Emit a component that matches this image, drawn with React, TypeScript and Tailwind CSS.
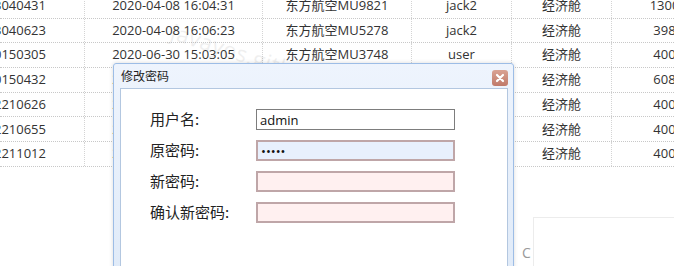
import React from 'react';

const rows = [
  ['20202003040431', '2020-04-08 16:04:31', '东方航空MU9821', 'jack2', '经济舱', '1300'],
  ['20202003040623', '2020-04-08 16:06:23', '东方航空MU5278', 'jack2', '经济舱', '398'],
  ['20202020150305', '2020-06-30 15:03:05', '东方航空MU3748', 'user', '经济舱', '400'],
  ['20202020150432', '2020-06-30 15:04:32', '东方航空MU3748', 'user', '经济舱', '608'],
  ['20202022210626', '2020-07-02 21:06:26', '东方航空MU5278', 'admin', '经济舱', '400'],
  ['20202022210655', '2020-07-02 21:06:55', '东方航空MU5278', 'admin', '经济舱', '400'],
  ['20202022211012', '2020-07-02 21:10:12', '东方航空MU5278', 'admin', '经济舱', '400'],
];

const widths = ['w-[85px]', 'w-[178px]', 'w-[149px]', 'w-[100px]', 'w-[100px]', 'w-[106px]'];

const font = { fontFamily: '"Open Sans", "Noto Sans CJK SC", sans-serif' };

function Field({ label, value, type, tone }: { label: string; value?: string; type?: string; tone: 'plain' | 'fill' | 'empty' }) {
  const cls =
    tone === 'plain'
      ? 'border border-[#7d7d7d] bg-white'
      : tone === 'fill'
        ? 'border-2 border-[#bfa6a8] bg-[#e8f0fd]'
        : 'border-2 border-[#bfa6a8] bg-[#fff0f0]';
  return (
    <div className="flex items-center h-[21px]">
      <div className="w-[106px] text-[15px] text-[#222]">{label}</div>
      <input
        readOnly
        type={type || 'text'}
        value={value || ''}
        className={`w-[199px] h-[21px] px-[3px] text-[13px] text-[#111] outline-none ${cls}`}
        style={font}
      />
    </div>
  );
}

export default function App() {
  return (
    <div className="relative w-[674px] h-[266px] overflow-hidden bg-white text-[13px] text-[#333]" style={font}>
      {/* grid */}
      <div className="-mt-[6px]">
        {rows.map((r, i) => (
          <div key={i} className="flex h-[24.7px] border-b border-dotted border-[#c8c8c8] whitespace-nowrap">
            {r.map((c, j) => (
              <div
                key={j}
                className={`${widths[j]} shrink-0 flex items-center overflow-hidden border-r border-dotted border-[#d4d4d4] ${
                  j === 0 ? 'justify-end pr-[38px]' : 'justify-center'
                }`}
              >
                {c}
              </div>
            ))}
          </div>
        ))}
      </div>

      {/* bottom pager area */}
      <div className="flex mt-[50px]">
        <div className="w-[533px] shrink-0 pl-[522px] pt-[25px] text-[14px] text-[#999]">C</div>
        <div className="flex-1 h-[50px] border-t border-l border-[#ececec]" />
      </div>

      {/* watermark */}
      <div className="absolute left-[172px] top-[14px] rotate-[18deg] origin-left text-[22px] text-[#000] opacity-[0.06] tracking-wide pointer-events-none">
        javayos.github.io
      </div>

      {/* dialog */}
      <div className="absolute left-[113px] top-[63px] w-[401px] h-[230px] flex flex-col border border-[#9dbde6] rounded-t-[3px] bg-gradient-to-b from-[#eef4fd] to-[#dfeaf8] shadow-[0_0_4px_rgba(0,0,0,0.15)]">
        <div className="h-[24px] flex items-center justify-between pl-[7px] pr-[5px]">
          <span className="text-[12px] text-[#1e1e1e]" style={{ fontFamily: '"Noto Sans CJK SC", sans-serif' }}>修改密码</span>
          <div className="w-[16px] h-[16px] mt-[3px] rounded-[3px] bg-gradient-to-b from-[#d9a394] to-[#c07a6a] flex items-center justify-center">
            <svg width="10" height="10" viewBox="0 0 10 10">
              <path d="M2 2L8 8M8 2L2 8" stroke="#fff" strokeWidth="2.2" strokeLinecap="round" />
            </svg>
          </div>
        </div>
        <div className="flex-1 ml-[6px] mr-[5px] border border-[#b3c7e0] bg-white pl-[29px] pt-[20px] flex flex-col gap-[10px]" style={{ fontFamily: '"Noto Sans CJK SC", sans-serif' }}>
          <Field label="用户名:" value="admin" tone="plain" />
          <Field label="原密码:" value="admin" type="password" tone="fill" />
          <Field label="新密码:" tone="empty" />
          <Field label="确认新密码:" tone="empty" />
        </div>
      </div>
    </div>
  );
}
